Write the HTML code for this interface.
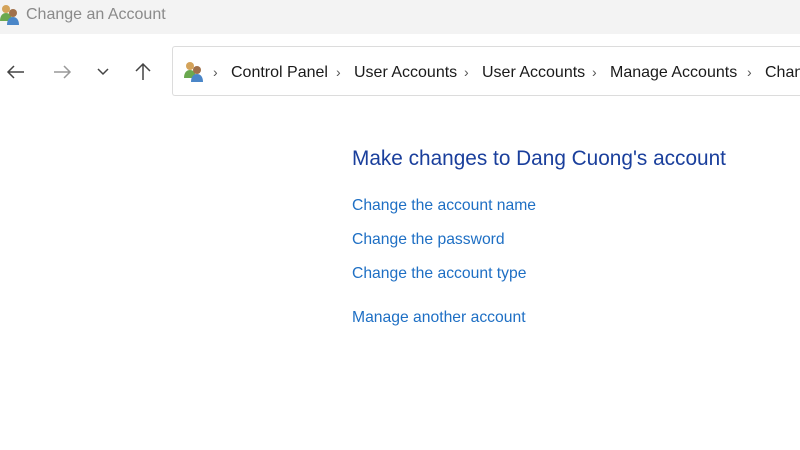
<!DOCTYPE html>
<html><head><style>
html,body{margin:0;width:800px;height:450px;overflow:hidden}
body{background:#fff;font-family:"Liberation Sans",sans-serif;position:relative}
.t{position:absolute;white-space:nowrap}
#tb{position:absolute;left:0;top:0;width:800px;height:34px;background:#f3f3f3}
#addr{position:absolute;left:172px;top:46px;width:628px;height:50px;border:1px solid #dcdcdc;border-right:none;border-radius:3px 0 0 3px;background:#fff;box-sizing:border-box}
.bc{top:64px;font-size:16px;color:#1a1a1a}
.ch{top:64px;font-size:14px;color:#555}
.lk{left:352px;font-size:15.7px;color:#1e6fc4}
#clip{position:absolute;left:0;top:0;width:800px;height:450px;overflow:hidden}
</style></head><body><div id="clip">
<div id="tb"></div>
<svg class="t" style="left:0;top:3px" width="20" height="22" viewBox="0 0 20 22">
<circle cx="6" cy="6" r="4" fill="#d4a35a"/><path d="M0 18c0-6 3-8 6-8s6 2 6 8z" fill="#6aa84f"/>
<circle cx="13" cy="10" r="4" fill="#a0704a"/><path d="M7 22c0-6 3-8 6-8s6 2 6 8z" fill="#4a86c8"/></svg>
<div class="t" style="left:26px;top:6px;font-size:16px;color:#8a8a8a">Change an Account</div>
<svg class="t" style="left:6px;top:62px" width="160" height="20" viewBox="0 0 160 20" fill="none" stroke-width="1.5">
<path d="M18 10H2M8 4L2 10l6 6" stroke="#444"/>
<path d="M48 10h16M58 4l6 6-6 6" stroke="#999"/>
<path d="M92 7l5 5 5-5" stroke="#444"/>
<path d="M137 18V2M130 9l7-7 7 7" stroke="#444"/>
</svg>
<div id="addr"></div>
<svg class="t" style="left:183px;top:60px" width="22" height="22" viewBox="0 0 20 22">
<circle cx="6" cy="6" r="4" fill="#d4a35a"/><path d="M0 18c0-6 3-8 6-8s6 2 6 8z" fill="#6aa84f"/>
<circle cx="13" cy="10" r="4" fill="#a0704a"/><path d="M7 22c0-6 3-8 6-8s6 2 6 8z" fill="#4a86c8"/></svg>
<div class="t ch" style="left:213px">›</div>
<div class="t bc" style="left:231px">Control Panel</div>
<div class="t ch" style="left:336px">›</div>
<div class="t bc" style="left:354px">User Accounts</div>
<div class="t ch" style="left:464px">›</div>
<div class="t bc" style="left:482px">User Accounts</div>
<div class="t ch" style="left:592px">›</div>
<div class="t bc" style="left:610px">Manage Accounts</div>
<div class="t ch" style="left:747px">›</div>
<div class="t bc" style="left:765px;width:35px;overflow:hidden">Change</div>
<div class="t" style="left:352px;top:147px;font-size:20.8px;color:#1a3f9c">Make changes to Dang Cuong's account</div>
<div class="t lk" style="top:197px">Change the account name</div>
<div class="t lk" style="top:231px">Change the password</div>
<div class="t lk" style="top:265px">Change the account type</div>
<div class="t lk" style="top:309px">Manage another account</div>
</div></body></html>
